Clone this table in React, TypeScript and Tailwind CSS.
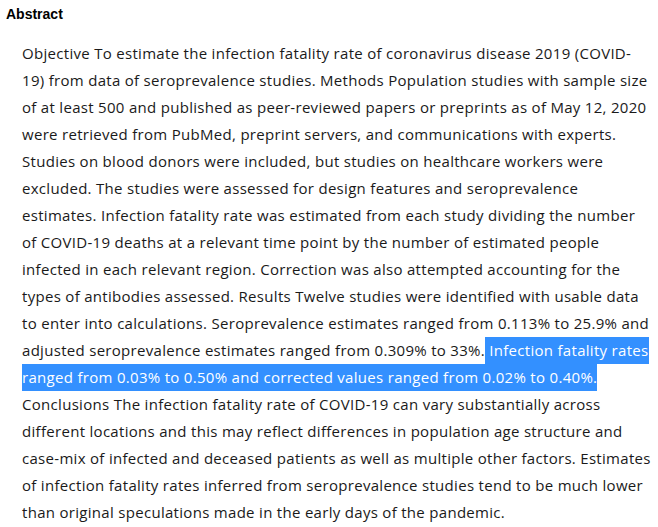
const before = [
  "Objective To estimate the infection fatality rate of coronavirus disease 2019 (COVID-",
  "19) from data of seroprevalence studies. Methods Population studies with sample size",
  "of at least 500 and published as peer-reviewed papers or preprints as of May 12, 2020",
  "were retrieved from PubMed, preprint servers, and communications with experts.",
  "Studies on blood donors were included, but studies on healthcare workers were",
  "excluded. The studies were assessed for design features and seroprevalence",
  "estimates. Infection fatality rate was estimated from each study dividing the number",
  "of COVID-19 deaths at a relevant time point by the number of estimated people",
  "infected in each relevant region. Correction was also attempted accounting for the",
  "types of antibodies assessed. Results Twelve studies were identified with usable data",
  "to enter into calculations. Seroprevalence estimates ranged from 0.113% to 25.9% and",
];

const after = [
  "Conclusions The infection fatality rate of COVID-19 can vary substantially across",
  "different locations and this may reflect differences in population age structure and",
  "case-mix of infected and deceased patients as well as multiple other factors. Estimates",
  "of infection fatality rates inferred from seroprevalence studies tend to be much lower",
  "than original speculations made in the early days of the pandemic.",
];

export default function App() {
  return (
    <div className="w-[658px] h-[527px] bg-white overflow-hidden">
      <h3
        className="pl-[6px] pt-[5px] text-[14px] leading-[18px] font-bold text-black"
        style={{ fontFamily: '"Liberation Sans", Arial, sans-serif' }}
      >
        Abstract
      </h3>
      <div
        className="mt-[17px] ml-[22px] text-[15px] leading-[27px] tracking-[0.3px] text-[#1a1a1a] whitespace-nowrap"
        style={{ fontFamily: '"Open Sans", sans-serif' }}
      >
        {before.map((line) => (
          <div key={line}>{line}</div>
        ))}
        {/* selected sentence */}
        <div>
          adjusted seroprevalence estimates ranged from 0.309% to 33%.
          <span className="bg-[#3390ff] text-white inline-block">&nbsp;Infection fatality rates</span>
        </div>
        <div>
          <span className="bg-[#3390ff] text-white inline-block">
            ranged from 0.03% to 0.50% and corrected values ranged from 0.02% to 0.40%.
          </span>
        </div>
        {after.map((line) => (
          <div key={line}>{line}</div>
        ))}
      </div>
    </div>
  );
}
